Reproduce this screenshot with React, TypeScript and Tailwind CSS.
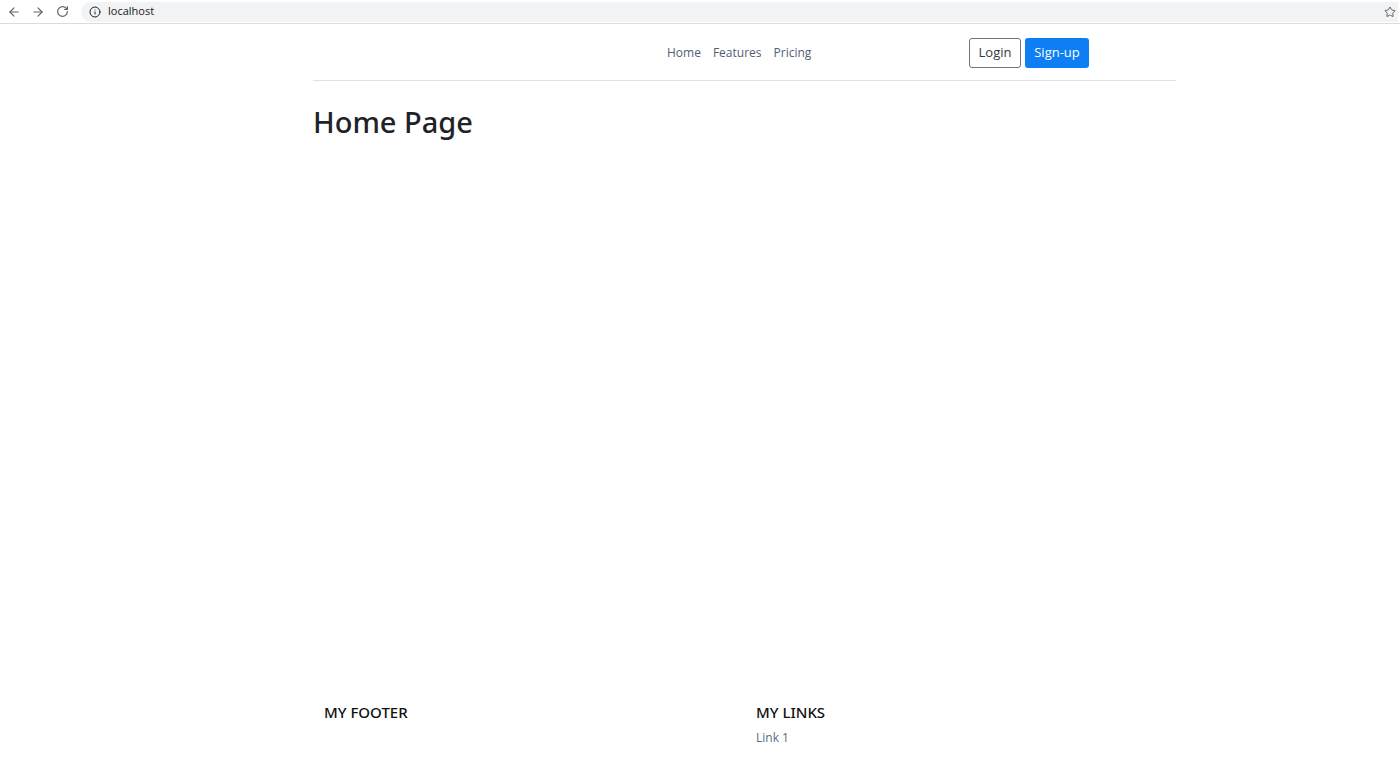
import React from 'react';
import { ArrowLeft, ArrowRight, RotateCw, Info, Star } from 'lucide-react';

const BrowserBar: React.FC = () => (
  <div className="flex h-[24px] items-center border-b border-[#dadce0] bg-white pl-[7px] pr-[2px]">
    <ArrowLeft size={14} strokeWidth={2} className="text-[#5f6368]" />
    <ArrowRight size={14} strokeWidth={2} className="ml-[10px] text-[#5f6368]" />
    <RotateCw size={13} strokeWidth={2.2} className="ml-[11px] text-[#5f6368]" />
    <div className="ml-[12px] flex h-[20px] flex-1 items-center rounded-l-full bg-[#f1f3f4] pl-[8px]">
      <Info size={12} strokeWidth={2} className="text-[#202124]" />
      <span className="ml-[7px] text-[11px] text-[#202124]">localhost</span>
      <Star size={12} strokeWidth={2} className="ml-auto mr-[2px] text-[#5f6368]" />
    </div>
  </div>
);

const App: React.FC = () => {
  const links = ['Home', 'Features', 'Pricing'];

  return (
    <div className="flex min-h-[770px] flex-col bg-white font-['Open_Sans','Noto_Sans',sans-serif] text-[#212529]">
      <BrowserBar />

      <div className="ml-[313px] flex w-[863px] flex-1 flex-col">
        <header className="flex items-center border-b border-[#dee2e6] pb-[12px] pt-[14px]">
          <nav className="ml-[354px] flex gap-[12px] text-[12px] text-[#4f6175]">
            {links.map((l) => (
              <a key={l} href="#" className="leading-[30px]">
                {l}
              </a>
            ))}
          </nav>
          <div className="ml-auto mr-[87px] flex gap-[4px] text-[13px]">
            <button className="h-[30px] w-[52px] rounded-[3px] border border-[#6c757d] text-[#343a40]">
              Login
            </button>
            <button className="h-[30px] w-[64px] rounded-[3px] bg-[#0d7ef4] text-white">
              Sign-up
            </button>
          </div>
        </header>

        <h1 className="mt-[20px] font-['Noto_Sans',sans-serif] text-[29px] font-medium leading-[42px] text-[#1f2328]">
          Home Page
        </h1>

        <footer className="mt-auto flex pb-[23px] pl-[11px] font-['Noto_Sans',sans-serif]">
          <div className="w-[432px]">
            <h5 className="text-[15px] font-medium leading-[22px] text-[#111]">MY FOOTER</h5>
          </div>
          <div>
            <h5 className="text-[15px] font-medium leading-[22px] text-[#111]">MY LINKS</h5>
            <a href="#" className="mt-[6px] block font-['Open_Sans',sans-serif] text-[12px] text-[#5a6d82]">
              Link 1
            </a>
          </div>
        </footer>
      </div>
    </div>
  );
};

export default App;
